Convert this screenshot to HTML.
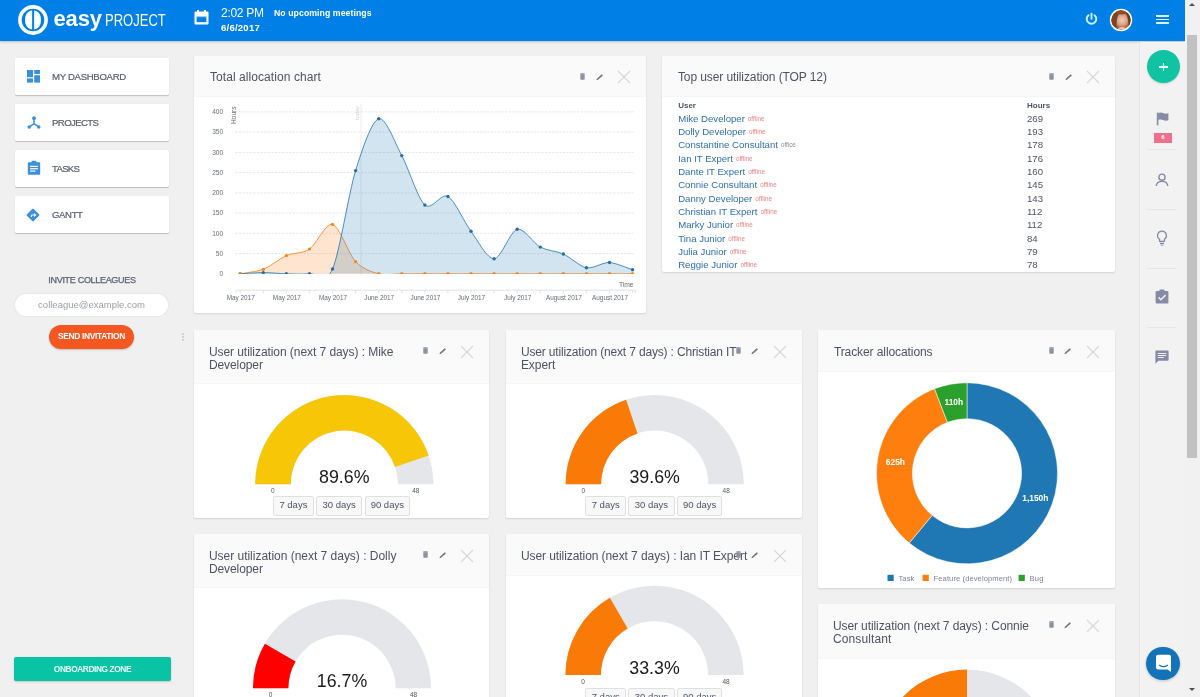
<!DOCTYPE html><html><head><meta charset="utf-8"><title>Easy Project - My dashboard</title><style>
*{box-sizing:border-box;margin:0;padding:0}
html,body{width:1200px;height:697px;overflow:hidden;background:#f0f0f0;font-family:"Liberation Sans",sans-serif;color:#4e5364}
body{position:relative}
#root{position:absolute;left:0;top:0;width:1200px;height:697px;overflow:hidden;will-change:transform}
.abs{position:absolute}
#hdr{position:absolute;left:0;top:0;width:1185px;height:41.4px;background:#0080e6;box-shadow:0 1px 2px rgba(0,0,0,.22)}
.card{position:absolute;background:#fff;border-radius:2px;box-shadow:0 1px 2px rgba(0,0,0,.12),0 0 1px rgba(0,0,0,.06);overflow:hidden}
.card .hd{position:absolute;left:0;top:0;right:0;background:#fafafa;border-bottom:1px solid #f6f6f6}
.card .tt{position:absolute;left:15.9px;top:16.1px;font-size:12px;line-height:13px;color:#4e5364;white-space:nowrap}
.mi{position:absolute;left:14.5px;width:154.5px;height:36.8px;background:#fff;border-radius:1.5px;box-shadow:0 1px 1px rgba(0,0,0,.2),0 0 1px rgba(0,0,0,.1)}
.mi span{position:absolute;left:37.5px;top:12.7px;-webkit-text-stroke:.2px #5b6070;font-size:9.6px;line-height:11px;color:#5b6070;white-space:nowrap}
.mi svg{position:absolute;left:12.2px;top:11.7px}
.btn{position:absolute;top:0;height:20px;border:1px solid #e0e0e0;border-radius:2px;background:#f8f8f8;font-size:9.5px;line-height:16.8px;text-align:center;color:#4e5364}
.row{position:absolute;left:16.2px;font-size:9.6px;line-height:13px;color:#3070b0;white-space:nowrap}
.row i{font-style:normal;font-size:6.3px;color:#ee8385;margin-left:3px;position:relative;top:-1.2px}
.hr{position:absolute;left:365px;font-size:9.6px;line-height:13px;color:#4e5364}
</style></head><body><div id="root">
<header id="hdr">
<svg class="abs" style="left:17px;top:3.8px" width="32" height="32" viewBox="0 0 32 32"><circle cx="16" cy="16" r="13.1" fill="none" stroke="#fff" stroke-width="3.6"/><path d="M15.1 6.6C10.6 7 8 11 8 16s2.6 9 7.1 9.4Z" fill="#fff"/><path d="M17.1 6.6C21.6 7 24 11 24 16s-2.4 9-6.9 9.4Z" fill="#fff"/></svg>
<div class="abs" style="left:53.4px;top:6.3px;font-size:22px;line-height:25px;font-weight:bold;color:#fff;letter-spacing:-0.114px">easy</div>
<div class="abs" style="left:105.3px;top:11.2px;font-size:16.6px;line-height:19px;color:#fff;transform:scaleX(.785);transform-origin:0 0;white-space:nowrap">PROJECT</div>
<svg class="abs" style="left:194px;top:9px" width="15" height="16" viewBox="0 0 15 16"><path d="M1.5 2.5h12a1 1 0 0 1 1 1v11a1 1 0 0 1-1 1h-12a1 1 0 0 1-1-1v-11a1 1 0 0 1 1-1Z" fill="#fff"/><rect x="3" y="1" width="2" height="3" fill="#fff"/><rect x="10" y="1" width="2" height="3" fill="#fff"/><rect x="2.6" y="7" width="9.8" height="6.2" fill="#0080e6"/><rect x="2.6" y="7" width="9.8" height="1.2" fill="#fff" opacity=".6"/></svg>
<div class="abs" style="left:221px;top:6.4px;font-size:12px;line-height:14px;color:#fff;letter-spacing:-0.282px">2:02 PM</div>
<div class="abs" style="left:221px;top:22.4px;font-size:9.5px;line-height:12px;color:#fff;font-weight:bold;letter-spacing:0.246px">6/6/2017</div>
<div class="abs" style="left:274px;top:8px;font-size:8.7px;line-height:11px;color:#fff;font-weight:bold;letter-spacing:0.08px">No upcoming meetings</div>
<svg class="abs" style="left:1085px;top:12px" width="13" height="13" viewBox="0 0 13 13"><path d="M3.500 3.200A4.800 4.800 0 1 0 9.500 3.200" fill="none" stroke="#cdf1ff" stroke-width="1.900" stroke-linecap="round"/><path d="M6.500 1.800v5" stroke="#cdf1ff" stroke-width="1.900" stroke-linecap="round"/></svg>
<svg class="abs" style="left:1109px;top:8px" width="24" height="24" viewBox="0 0 24 24"><defs><clipPath id="av"><circle cx="12" cy="12" r="9.700"/></clipPath><radialGradient id="fg" cx="54%" cy="50%" r="46%"><stop offset="0" stop-color="#f3cdb6"/><stop offset=".45" stop-color="#dca184"/><stop offset=".8" stop-color="#9c5a34"/><stop offset="1" stop-color="#7a4224"/></radialGradient><filter id="bl"><feGaussianBlur stdDeviation=".7"/></filter></defs><circle cx="12" cy="12" r="11.200" fill="#fff"/><g clip-path="url(#av)"><rect width="24" height="24" fill="url(#fg)"/><g filter="url(#bl)"><path d="M1 24C1 10 4 2 13 3C8 6 7 12 8 24Z" fill="#7b4526"/><path d="M23 24c1-12-1-19-8-21c4 4 5 11 4.500 21Z" fill="#6e3a1e"/><ellipse cx="12.500" cy="4" rx="6" ry="2.500" fill="#8a4f2c"/><ellipse cx="13" cy="21.500" rx="4" ry="2.500" fill="#e9c2ac"/></g></g></svg>
<div class="abs" style="left:1156px;top:15.1px;width:13px;height:1.8px;background:#d4f3ff"></div><div class="abs" style="left:1156px;top:18.6px;width:13px;height:1.8px;background:#d4f3ff"></div><div class="abs" style="left:1156px;top:21.9px;width:13px;height:1.8px;background:#d4f3ff"></div>
</header>
<div class="abs" style="left:1185px;top:0;width:15px;height:697px;background:#f1f1f1"></div>
<div class="abs" style="left:1187px;top:35px;width:10.2px;height:422.5px;background:#c1c1c1"></div>
<div class="abs" style="left:1188.5px;top:3px;width:0;height:0;border-left:3.5px solid transparent;border-right:3.5px solid transparent;border-bottom:3.5px solid #505050"></div>
<div class="abs" style="left:1188.5px;top:687.5px;width:0;height:0;border-left:3.5px solid transparent;border-right:3.5px solid transparent;border-top:3.5px solid #505050"></div>
<a class="mi" style="top:58.3px"><svg width="14" height="14" viewBox="0 0 14 14"><rect x="0" y="0" width="6" height="7.2" fill="#3b8fdc"/><rect x="7.2" y="0" width="5.8" height="4" fill="#3b8fdc"/><rect x="0" y="8.4" width="6" height="4.2" fill="#3b8fdc"/><rect x="7.2" y="5.2" width="5.8" height="7.4" fill="#3b8fdc"/></svg><span style="letter-spacing:-0.31px">MY DASHBOARD</span></a>
<a class="mi" style="top:104.3px"><svg width="14" height="14" viewBox="0 0 14 14"><circle cx="7" cy="2.2" r="1.9" fill="#3b8fdc"/><circle cx="2.2" cy="11" r="1.7" fill="#3b8fdc"/><circle cx="11.8" cy="11" r="1.7" fill="#3b8fdc"/><path d="M7 2.5v5.2M7 7.7L2.4 10.8M7 7.7l4.6 3.1" stroke="#3b8fdc" stroke-width="1.5" fill="none"/></svg><span style="letter-spacing:-0.601px">PROJECTS</span></a>
<a class="mi" style="top:150.3px"><svg style="top:9.7px" width="14" height="15" viewBox="0 0 14 14" preserveAspectRatio="none"><path d="M1.8 2h10.4a1 1 0 0 1 1 1v9.8a1 1 0 0 1-1 1H1.8a1 1 0 0 1-1-1V3a1 1 0 0 1 1-1Z" fill="#3b8fdc"/><rect x="4.6" y="0.6" width="4.8" height="2.6" rx=".8" fill="#3b8fdc"/><rect x="3" y="5.4" width="8" height="1.1" fill="#fff"/><rect x="3" y="7.6" width="8" height="1.1" fill="#fff"/><rect x="3" y="9.8" width="5.4" height="1.1" fill="#fff"/></svg><span style="letter-spacing:-0.691px">TASKS</span></a>
<a class="mi" style="top:196.3px"><svg style="left:11.4px" width="14" height="14" viewBox="0 0 14 14"><rect x="2.2" y="2.2" width="9.6" height="9.6" rx="1" transform="rotate(45 7 7)" fill="#3b8fdc"/><path d="M4.8 9V7.2a.8.8 0 0 1 .8-.8h2.6V4.9L10.4 7 8.2 9V7.6H6V9Z" fill="#fff"/></svg><span style="letter-spacing:-0.383px">GANTT</span></a>
<div class="abs" style="left:15px;top:274.4px;width:154px;text-align:center;font-size:9px;line-height:12px;color:#5b6070;-webkit-text-stroke:.25px #5b6070;letter-spacing:-0.308px;white-space:nowrap">INVITE COLLEAGUES</div>
<div class="abs" style="left:15px;top:294px;width:153px;height:22px;border-radius:11px;background:#fff;box-shadow:0 0 2px rgba(0,0,0,.12);text-align:center;font-size:9.5px;line-height:22px;color:#9b9ea8">colleague@example.com</div>
<div class="abs" style="left:49px;top:325.4px;width:85px;height:23.6px;border-radius:12px;background:#f4571f;box-shadow:0 1px 2px rgba(0,0,0,.2);text-align:center;font-size:8.4px;font-weight:bold;line-height:23.6px;color:#fff;letter-spacing:-0.323px;white-space:nowrap">SEND INVITATION</div>
<div class="abs" style="left:14px;top:656.8px;width:157px;height:24px;border-radius:2px;background:#08c4a5;box-shadow:0 1px 2px rgba(0,0,0,.18);text-align:center;font-size:8.4px;font-weight:bold;line-height:25.4px;color:#e8fffb;letter-spacing:-0.429px;white-space:nowrap">ONBOARDING ZONE</div>
<div class="abs" style="left:182px;top:333px;width:2px;height:2px;border-radius:1px;background:#c9c9c9"></div>
<div class="abs" style="left:182px;top:336px;width:2px;height:2px;border-radius:1px;background:#c9c9c9"></div>
<div class="abs" style="left:182px;top:339px;width:2px;height:2px;border-radius:1px;background:#c9c9c9"></div>
<div class="abs" style="left:1140px;top:42px;width:45px;height:655px;background:#f2f2f2"></div>
<div class="abs" style="left:1139.3px;top:43px;width:1px;height:654px;background:#e6e6e6"></div>
<div class="abs" style="left:1146.8px;top:49.9px;width:33.2px;height:33.2px;border-radius:50%;background:#10c3a3;box-shadow:0 1px 2px rgba(0,0,0,.15)"></div>
<div class="abs" style="left:1159.3px;top:66.3px;width:8.4px;height:1.5px;background:#e4fffa"></div><div class="abs" style="left:1162.75px;top:62.85px;width:1.5px;height:8.4px;background:#e4fffa"></div>
<svg class="abs" style="left:1156px;top:112px" width="13" height="14" viewBox="0 0 13 14"><path d="M.8 0.6h1.6V13.4H.8Z" fill="#858ba4"/><path d="M2.2 1c2-.9 3.4-.6 5 .1s3.200 .8 5.200.1v7c-2 .7-3.600.6-5.200-.1s-3-.9-5-.1Z" fill="#858ba4"/></svg>
<div class="abs" style="left:1154px;top:133.4px;width:18px;height:9.2px;background:#ef6f8c;color:#fff;font-size:6px;font-weight:bold;line-height:9.2px;text-align:center">6</div>
<svg class="abs" style="left:1155px;top:173px" width="14" height="14" viewBox="0 0 14 14"><circle cx="7" cy="4.2" r="3.1" fill="none" stroke="#858ba4" stroke-width="1.4"/><path d="M1.2 13c.4-3 2.6-4.6 5.800-4.600s5.400 1.600 5.800 4.600" fill="none" stroke="#858ba4" stroke-width="1.4"/></svg>
<svg class="abs" style="left:1155px;top:230px" width="14" height="16" viewBox="0 0 14 16"><path d="M7 1.200a4.400 4.400 0 0 0-2.400 8.100v2h4.800v-2A4.400 4.400 0 0 0 7 1.200Z" fill="none" stroke="#858ba4" stroke-width="1.3"/><path d="M5 13.400h4M5.600 15h2.800" stroke="#858ba4" stroke-width="1.2"/></svg>
<svg class="abs" style="left:1155px;top:289px" width="14" height="15" viewBox="0 0 14 15"><path d="M1.600 2h10.800a1 1 0 0 1 1 1v10.600a1 1 0 0 1-1 1H1.600a1 1 0 0 1-1-1V3a1 1 0 0 1 1-1Z" fill="#858ba4"/><rect x="4.400" y=".6" width="5.200" height="2.600" rx=".8" fill="#858ba4"/><path d="M3.600 8.400l2.300 2.300 4.600-4.600" fill="none" stroke="#f0f0f0" stroke-width="1.500"/></svg>
<svg class="abs" style="left:1155px;top:350px" width="14" height="14" viewBox="0 0 14 14"><path d="M1.400 0.400h11.200a1 1 0 0 1 1 1v8.400a1 1 0 0 1-1 1H3.400L.4 13.800V1.400a1 1 0 0 1 1-1Z" fill="#858ba4"/><rect x="2.800" y="3" width="8.400" height="1" fill="#f0f0f0"/><rect x="2.800" y="5" width="8.400" height="1" fill="#f0f0f0"/><rect x="2.800" y="7" width="6" height="1" fill="#f0f0f0"/></svg>
<div class="abs" style="left:1147px;top:148.6px;width:29px;height:1px;background:#e6e6e6"></div>
<div class="abs" style="left:1147px;top:208.8px;width:29px;height:1px;background:#e6e6e6"></div>
<div class="abs" style="left:1147px;top:268px;width:29px;height:1px;background:#e6e6e6"></div>
<div class="abs" style="left:1147px;top:327.3px;width:29px;height:1px;background:#e6e6e6"></div>
<div class="abs" style="left:1146.4px;top:646.9px;width:33.2px;height:33.2px;border-radius:50%;background:#1273b9;box-shadow:0 1px 3px rgba(0,0,0,.2)"></div>
<svg class="abs" style="left:1154.6px;top:654.2px" width="17" height="19" viewBox="0 0 17 19"><path d="M3 0.800h11a2 2 0 0 1 2 2v15.200l-3.400-2.600H3a2 2 0 0 1-2-2V2.800a2 2 0 0 1 2-2Z" fill="#fff"/><path d="M4.400 11.200c2.400 1.700 5.800 1.700 8.200 0" fill="none" stroke="#1273b9" stroke-width="1.100" stroke-linecap="round"/></svg>
<div class="card" style="left:194px;top:55.5px;width:452px;height:257.5px">
<div class="hd" style="height:41.6px"></div>
<div class="tt" style="top:15.5px;left:15.9px"><span style="letter-spacing:0.076px">Total allocation chart</span></div>
<svg class="abs" style="left:386.4px;top:17.4px" width="5" height="7" viewBox="0 0 5 7"><rect x=".3" y="1.2" width="4.400" height="5.600" rx=".8" fill="#8c91a4"/><rect x="0" y=".5" width="5" height=".9" fill="#8c91a4"/><rect x="1.500" y="0" width="2" height=".8" fill="#8c91a4"/></svg>
<svg class="abs" style="left:401.6px;top:17.4px" width="8" height="8" viewBox="0 0 8 8"><path d="M.5 7.200l.4-1.500L5.700 1.200l1.200 1.200-4.900 4.400Z" fill="#6f7487"/></svg>
<svg class="abs" style="left:423px;top:14.6px" width="14" height="14" viewBox="0 0 14 14"><path d="M1 1l12 12M13 1L1 13" stroke="#d8d8d8" stroke-width="1.2" fill="none"/></svg>
<svg class="abs" style="left:0;top:0" width="452" height="258" viewBox="0 0 452 258">
<defs><clipPath id="cp"><rect x="40.19999999999999" y="45.900000000000006" width="404.40000000000003" height="172.20"/></clipPath></defs>
<text x="29.2" y="220.0" text-anchor="end" font-family='"Liberation Sans", sans-serif' font-size="6.6" fill="#6c707c">0</text>
<line x1="41.2" x2="439.6" y1="197.6" y2="197.6" stroke="#e6e6e6" stroke-width="1" stroke-dasharray="2.2 1.4"/>
<text x="29.2" y="199.8" text-anchor="end" font-family='"Liberation Sans", sans-serif' font-size="6.6" fill="#6c707c">50</text>
<line x1="41.2" x2="439.6" y1="177.3" y2="177.3" stroke="#e6e6e6" stroke-width="1" stroke-dasharray="2.2 1.4"/>
<text x="29.2" y="179.5" text-anchor="end" font-family='"Liberation Sans", sans-serif' font-size="6.6" fill="#6c707c">100</text>
<line x1="41.2" x2="439.6" y1="157.1" y2="157.1" stroke="#e6e6e6" stroke-width="1" stroke-dasharray="2.2 1.4"/>
<text x="29.2" y="159.3" text-anchor="end" font-family='"Liberation Sans", sans-serif' font-size="6.6" fill="#6c707c">150</text>
<line x1="41.2" x2="439.6" y1="136.9" y2="136.9" stroke="#e6e6e6" stroke-width="1" stroke-dasharray="2.2 1.4"/>
<text x="29.2" y="139.1" text-anchor="end" font-family='"Liberation Sans", sans-serif' font-size="6.6" fill="#6c707c">200</text>
<line x1="41.2" x2="439.6" y1="116.6" y2="116.6" stroke="#e6e6e6" stroke-width="1" stroke-dasharray="2.2 1.4"/>
<text x="29.2" y="118.8" text-anchor="end" font-family='"Liberation Sans", sans-serif' font-size="6.6" fill="#6c707c">250</text>
<line x1="41.2" x2="439.6" y1="96.4" y2="96.4" stroke="#e6e6e6" stroke-width="1" stroke-dasharray="2.2 1.4"/>
<text x="29.2" y="98.6" text-anchor="end" font-family='"Liberation Sans", sans-serif' font-size="6.6" fill="#6c707c">300</text>
<line x1="41.2" x2="439.6" y1="76.1" y2="76.1" stroke="#e6e6e6" stroke-width="1" stroke-dasharray="2.2 1.4"/>
<text x="29.2" y="78.3" text-anchor="end" font-family='"Liberation Sans", sans-serif' font-size="6.6" fill="#6c707c">350</text>
<line x1="41.2" x2="439.6" y1="55.9" y2="55.9" stroke="#e6e6e6" stroke-width="1" stroke-dasharray="2.2 1.4"/>
<text x="29.2" y="58.1" text-anchor="end" font-family='"Liberation Sans", sans-serif' font-size="6.6" fill="#6c707c">400</text>
<line x1="167" x2="167" y1="47.9" y2="217.8" stroke="#ececec" stroke-width="1"/>
<text transform="translate(164.5,63.9) rotate(-90)" font-family='"Liberation Sans", sans-serif' font-size="5.6" fill="#d2d2d2">today</text>
<text transform="translate(41.9,67.9) rotate(-90)" font-family='"Liberation Sans", sans-serif' font-size="6.5" fill="#6a6e7a">Hours</text>
<text x="439.6" y="231.1" text-anchor="end" font-family='"Liberation Sans", sans-serif' font-size="6.7" fill="#666b78">Time</text>
<path d="M42.2,237.2V234.2H441.6V237.2" fill="none" stroke="#e2e2e2" stroke-width="1"/>
<line x1="46.2" x2="46.2" y1="234.2" y2="237.2" stroke="#e2e2e2" stroke-width="1"/>
<line x1="69.3" x2="69.3" y1="234.2" y2="237.2" stroke="#e2e2e2" stroke-width="1"/>
<line x1="92.4" x2="92.4" y1="234.2" y2="237.2" stroke="#e2e2e2" stroke-width="1"/>
<line x1="115.4" x2="115.4" y1="234.2" y2="237.2" stroke="#e2e2e2" stroke-width="1"/>
<line x1="138.5" x2="138.5" y1="234.2" y2="237.2" stroke="#e2e2e2" stroke-width="1"/>
<line x1="161.6" x2="161.6" y1="234.2" y2="237.2" stroke="#e2e2e2" stroke-width="1"/>
<line x1="184.7" x2="184.7" y1="234.2" y2="237.2" stroke="#e2e2e2" stroke-width="1"/>
<line x1="207.8" x2="207.8" y1="234.2" y2="237.2" stroke="#e2e2e2" stroke-width="1"/>
<line x1="230.9" x2="230.9" y1="234.2" y2="237.2" stroke="#e2e2e2" stroke-width="1"/>
<line x1="253.9" x2="253.9" y1="234.2" y2="237.2" stroke="#e2e2e2" stroke-width="1"/>
<line x1="277.0" x2="277.0" y1="234.2" y2="237.2" stroke="#e2e2e2" stroke-width="1"/>
<line x1="300.1" x2="300.1" y1="234.2" y2="237.2" stroke="#e2e2e2" stroke-width="1"/>
<line x1="323.2" x2="323.2" y1="234.2" y2="237.2" stroke="#e2e2e2" stroke-width="1"/>
<line x1="346.3" x2="346.3" y1="234.2" y2="237.2" stroke="#e2e2e2" stroke-width="1"/>
<line x1="369.4" x2="369.4" y1="234.2" y2="237.2" stroke="#e2e2e2" stroke-width="1"/>
<line x1="392.4" x2="392.4" y1="234.2" y2="237.2" stroke="#e2e2e2" stroke-width="1"/>
<line x1="415.5" x2="415.5" y1="234.2" y2="237.2" stroke="#e2e2e2" stroke-width="1"/>
<line x1="438.6" x2="438.6" y1="234.2" y2="237.2" stroke="#e2e2e2" stroke-width="1"/>
<text x="46.7" y="244.4" text-anchor="middle" font-family='"Liberation Sans", sans-serif' font-size="6.4" fill="#666b78">May 2017</text>
<text x="92.9" y="244.4" text-anchor="middle" font-family='"Liberation Sans", sans-serif' font-size="6.4" fill="#666b78">May 2017</text>
<text x="139.0" y="244.4" text-anchor="middle" font-family='"Liberation Sans", sans-serif' font-size="6.4" fill="#666b78">May 2017</text>
<text x="185.2" y="244.4" text-anchor="middle" font-family='"Liberation Sans", sans-serif' font-size="6.4" fill="#666b78">June 2017</text>
<text x="231.4" y="244.4" text-anchor="middle" font-family='"Liberation Sans", sans-serif' font-size="6.4" fill="#666b78">June 2017</text>
<text x="277.5" y="244.4" text-anchor="middle" font-family='"Liberation Sans", sans-serif' font-size="6.4" fill="#666b78">July 2017</text>
<text x="323.7" y="244.4" text-anchor="middle" font-family='"Liberation Sans", sans-serif' font-size="6.4" fill="#666b78">July 2017</text>
<text x="369.9" y="244.4" text-anchor="middle" font-family='"Liberation Sans", sans-serif' font-size="6.4" fill="#666b78">August 2017</text>
<text x="416.0" y="244.4" text-anchor="middle" font-family='"Liberation Sans", sans-serif' font-size="6.4" fill="#666b78">August 2017</text>
<g clip-path="url(#cp)">
<path d="M46.20,217.80Q64.67,215.17,69.28,213.35C76.21,210.62,85.44,202.62,92.36,199.59S108.52,197.79,115.45,193.11S131.60,166.54,138.53,168.42S154.69,198.25,161.61,205.66S177.77,215.98,184.69,217.80S200.85,217.80,207.78,217.80S223.93,217.80,230.86,217.80S247.02,217.80,253.94,217.80S270.10,217.80,277.02,217.80S293.18,217.80,300.11,217.80S316.26,217.80,323.19,217.80S339.35,217.80,346.27,217.80S362.43,217.80,369.35,217.80S385.51,217.80,392.44,217.80S408.59,217.80,415.52,217.80Q420.13,217.80,438.60,217.80L438.60,217.80L46.20,217.80Z" fill="#ff7f0e" fill-opacity=".2"/>
<path d="M46.20,217.80Q64.67,215.17,69.28,213.35C76.21,210.62,85.44,202.62,92.36,199.59S108.52,197.79,115.45,193.11S131.60,166.54,138.53,168.42S154.69,198.25,161.61,205.66S177.77,215.98,184.69,217.80S200.85,217.80,207.78,217.80S223.93,217.80,230.86,217.80S247.02,217.80,253.94,217.80S270.10,217.80,277.02,217.80S293.18,217.80,300.11,217.80S316.26,217.80,323.19,217.80S339.35,217.80,346.27,217.80S362.43,217.80,369.35,217.80S385.51,217.80,392.44,217.80S408.59,217.80,415.52,217.80Q420.13,217.80,438.60,217.80" fill="none" stroke="#ff7f0e" stroke-width=".8"/>
<path d="M46.20,217.80Q64.67,216.59,69.28,216.59C76.21,216.59,85.44,217.62,92.36,217.80S108.52,218.53,115.45,217.80S131.60,228.42,138.53,212.94S154.69,137.11,161.61,114.59S177.77,65.03,184.69,62.78S200.85,86.68,207.78,99.61S223.93,142.86,230.86,148.99S247.02,136.55,253.94,140.49S270.10,165.95,277.02,175.30S293.18,203.13,300.11,202.82S316.26,175.04,323.19,173.28S339.35,187.38,346.27,191.09S362.43,194.87,369.35,197.97S385.51,210.45,392.44,211.73S408.59,206.16,415.52,206.47Q420.13,206.67,438.60,213.75L438.60,217.80L46.20,217.80Z" fill="#1f77b4" fill-opacity=".2"/>
<path d="M46.20,217.80Q64.67,216.59,69.28,216.59C76.21,216.59,85.44,217.62,92.36,217.80S108.52,218.53,115.45,217.80S131.60,228.42,138.53,212.94S154.69,137.11,161.61,114.59S177.77,65.03,184.69,62.78S200.85,86.68,207.78,99.61S223.93,142.86,230.86,148.99S247.02,136.55,253.94,140.49S270.10,165.95,277.02,175.30S293.18,203.13,300.11,202.82S316.26,175.04,323.19,173.28S339.35,187.38,346.27,191.09S362.43,194.87,369.35,197.97S385.51,210.45,392.44,211.73S408.59,206.16,415.52,206.47Q420.13,206.67,438.60,213.75" fill="none" stroke="#1f77b4" stroke-width=".8"/>
<circle cx="46.20" cy="217.80" r="1.7" fill="#2b6c9c"/>
<circle cx="69.28" cy="216.59" r="1.7" fill="#2b6c9c"/>
<circle cx="92.36" cy="217.80" r="1.7" fill="#2b6c9c"/>
<circle cx="115.45" cy="217.80" r="1.7" fill="#2b6c9c"/>
<circle cx="138.53" cy="212.94" r="1.7" fill="#2b6c9c"/>
<circle cx="161.61" cy="114.59" r="1.7" fill="#2b6c9c"/>
<circle cx="184.69" cy="62.78" r="1.7" fill="#2b6c9c"/>
<circle cx="207.78" cy="99.61" r="1.7" fill="#2b6c9c"/>
<circle cx="230.86" cy="148.99" r="1.7" fill="#2b6c9c"/>
<circle cx="253.94" cy="140.49" r="1.7" fill="#2b6c9c"/>
<circle cx="277.02" cy="175.30" r="1.7" fill="#2b6c9c"/>
<circle cx="300.11" cy="202.82" r="1.7" fill="#2b6c9c"/>
<circle cx="323.19" cy="173.28" r="1.7" fill="#2b6c9c"/>
<circle cx="346.27" cy="191.09" r="1.7" fill="#2b6c9c"/>
<circle cx="369.35" cy="197.97" r="1.7" fill="#2b6c9c"/>
<circle cx="392.44" cy="211.73" r="1.7" fill="#2b6c9c"/>
<circle cx="415.52" cy="206.47" r="1.7" fill="#2b6c9c"/>
<circle cx="438.60" cy="213.75" r="1.7" fill="#2b6c9c"/>
<circle cx="46.20" cy="217.80" r="1.7" fill="#f08a2a"/>
<circle cx="69.28" cy="213.35" r="1.7" fill="#f08a2a"/>
<circle cx="92.36" cy="199.59" r="1.7" fill="#f08a2a"/>
<circle cx="115.45" cy="193.11" r="1.7" fill="#f08a2a"/>
<circle cx="138.53" cy="168.42" r="1.7" fill="#f08a2a"/>
<circle cx="161.61" cy="205.66" r="1.7" fill="#f08a2a"/>
<circle cx="184.69" cy="217.80" r="1.7" fill="#f08a2a"/>
<circle cx="207.78" cy="217.80" r="1.7" fill="#f08a2a"/>
<circle cx="230.86" cy="217.80" r="1.7" fill="#f08a2a"/>
<circle cx="253.94" cy="217.80" r="1.7" fill="#f08a2a"/>
<circle cx="277.02" cy="217.80" r="1.7" fill="#f08a2a"/>
<circle cx="300.11" cy="217.80" r="1.7" fill="#f08a2a"/>
<circle cx="323.19" cy="217.80" r="1.7" fill="#f08a2a"/>
<circle cx="346.27" cy="217.80" r="1.7" fill="#f08a2a"/>
<circle cx="369.35" cy="217.80" r="1.7" fill="#f08a2a"/>
<circle cx="392.44" cy="217.80" r="1.7" fill="#f08a2a"/>
<circle cx="415.52" cy="217.80" r="1.7" fill="#f08a2a"/>
<circle cx="438.60" cy="217.80" r="1.7" fill="#f08a2a"/>
</g></svg>
</div>
<div class="card" style="left:662px;top:55.5px;width:453px;height:216.6px">
<div class="hd" style="height:41.6px"></div>
<div class="tt" style="top:15.5px;left:15.9px"><span style="letter-spacing:-0.094px">Top user utilization (TOP 12)</span></div>
<svg class="abs" style="left:387.4px;top:17.4px" width="5" height="7" viewBox="0 0 5 7"><rect x=".3" y="1.2" width="4.400" height="5.600" rx=".8" fill="#8c91a4"/><rect x="0" y=".5" width="5" height=".9" fill="#8c91a4"/><rect x="1.500" y="0" width="2" height=".8" fill="#8c91a4"/></svg>
<svg class="abs" style="left:402.6px;top:17.4px" width="8" height="8" viewBox="0 0 8 8"><path d="M.5 7.200l.4-1.500L5.700 1.200l1.200 1.200-4.900 4.400Z" fill="#6f7487"/></svg>
<svg class="abs" style="left:424px;top:14.6px" width="14" height="14" viewBox="0 0 14 14"><path d="M1 1l12 12M13 1L1 13" stroke="#d8d8d8" stroke-width="1.2" fill="none"/></svg>
<div class="row" style="top:43px;color:#4e5364;font-weight:bold;font-size:8px">User</div><div class="hr" style="top:43px;font-weight:bold;font-size:8px">Hours</div>
<div class="row" style="top:56.30px">Mike Developer<i>offline</i></div><div class="hr" style="top:56.30px">269</div>
<div class="row" style="top:69.63px">Dolly Developer<i>offline</i></div><div class="hr" style="top:69.63px">193</div>
<div class="row" style="top:82.96px">Constantine Consultant<i style="color:#8a8d96">office</i></div><div class="hr" style="top:82.96px">178</div>
<div class="row" style="top:96.29px">Ian IT Expert<i>offline</i></div><div class="hr" style="top:96.29px">176</div>
<div class="row" style="top:109.62px">Dante IT Expert<i>offline</i></div><div class="hr" style="top:109.62px">160</div>
<div class="row" style="top:122.95px">Connie Consultant<i>offline</i></div><div class="hr" style="top:122.95px">145</div>
<div class="row" style="top:136.28px">Danny Developer<i>offline</i></div><div class="hr" style="top:136.28px">143</div>
<div class="row" style="top:149.61px">Christian IT Expert<i>offline</i></div><div class="hr" style="top:149.61px">112</div>
<div class="row" style="top:162.94px">Marky Junior<i>offline</i></div><div class="hr" style="top:162.94px">112</div>
<div class="row" style="top:176.27px">Tina Junior<i>offline</i></div><div class="hr" style="top:176.27px">84</div>
<div class="row" style="top:189.60px">Julia Junior<i>offline</i></div><div class="hr" style="top:189.60px">79</div>
<div class="row" style="top:202.93px">Reggie Junior<i>offline</i></div><div class="hr" style="top:202.93px">78</div>
</div>
<div class="card" style="left:194px;top:330px;width:295px;height:187.5px">
<div class="hd" style="height:54.2px"></div>
<div class="tt" style="top:16.0px;left:14.9px"><span style="letter-spacing:-0.062px">User utilization (next 7 days) : Mike</span><br><span style="letter-spacing:-0.087px">Developer</span></div>
<svg class="abs" style="left:229.4px;top:17.4px" width="5" height="7" viewBox="0 0 5 7"><rect x=".3" y="1.2" width="4.400" height="5.600" rx=".8" fill="#8c91a4"/><rect x="0" y=".5" width="5" height=".9" fill="#8c91a4"/><rect x="1.500" y="0" width="2" height=".8" fill="#8c91a4"/></svg>
<svg class="abs" style="left:244.6px;top:17.4px" width="8" height="8" viewBox="0 0 8 8"><path d="M.5 7.200l.4-1.500L5.700 1.200l1.200 1.200-4.900 4.400Z" fill="#6f7487"/></svg>
<svg class="abs" style="left:266px;top:14.6px" width="14" height="14" viewBox="0 0 14 14"><path d="M1 1l12 12M13 1L1 13" stroke="#d8d8d8" stroke-width="1.2" fill="none"/></svg>
<svg class="abs" style="left:0;top:0" width="295" height="260" viewBox="0 0 295 260">
<path d="M61.20,154.20A89.1,89.1 0 0 1 239.40,154.20L203.90,154.20A53.6,53.6 0 0 0 96.70,154.20Z" fill="#e4e6ea"/>
<path d="M61.20,154.20A89.1,89.1 0 0 1 234.69,125.60L201.06,137.00A53.6,53.6 0 0 0 96.70,154.20Z" fill="#f6c607"/>
<text x="150.3" y="153.0" text-anchor="middle" font-family='"Liberation Sans", sans-serif' font-size="17.8" fill="#1a1a1a">89.6%</text>
<text x="78.8" y="163.0" text-anchor="middle" font-family='"Liberation Sans", sans-serif' font-size="6.5" fill="#555">0</text>
<text x="221.8" y="163.0" text-anchor="middle" font-family='"Liberation Sans", sans-serif' font-size="6.5" fill="#555">48</text>
</svg>
<div class="abs" style="left:0;top:165.5px;width:100%;height:20px">
<div class="btn" style="left:78.9px;width:41px">7 days</div><div class="btn" style="left:121.9px;width:46.4px">30 days</div><div class="btn" style="left:170.5px;width:45.6px">90 days</div>
</div>
</div>
<div class="card" style="left:506px;top:330px;width:295.5px;height:187.5px">
<div class="hd" style="height:54.2px"></div>
<div class="tt" style="top:16.0px;left:14.9px"><span style="letter-spacing:-0.162px">User utilization (next 7 days) : Christian IT</span><br><span style="letter-spacing:-0.036px">Expert</span></div>
<svg class="abs" style="left:229.9px;top:17.4px" width="5" height="7" viewBox="0 0 5 7"><rect x=".3" y="1.2" width="4.400" height="5.600" rx=".8" fill="#8c91a4"/><rect x="0" y=".5" width="5" height=".9" fill="#8c91a4"/><rect x="1.500" y="0" width="2" height=".8" fill="#8c91a4"/></svg>
<svg class="abs" style="left:245.1px;top:17.4px" width="8" height="8" viewBox="0 0 8 8"><path d="M.5 7.200l.4-1.500L5.700 1.200l1.200 1.200-4.900 4.400Z" fill="#6f7487"/></svg>
<svg class="abs" style="left:266.5px;top:14.6px" width="14" height="14" viewBox="0 0 14 14"><path d="M1 1l12 12M13 1L1 13" stroke="#d8d8d8" stroke-width="1.2" fill="none"/></svg>
<svg class="abs" style="left:0;top:0" width="295.5" height="260" viewBox="0 0 295.5 260">
<path d="M59.60,154.20A89.1,89.1 0 0 1 237.80,154.20L202.30,154.20A53.6,53.6 0 0 0 95.10,154.20Z" fill="#e4e6ea"/>
<path d="M59.60,154.20A89.1,89.1 0 0 1 120.10,69.81L131.50,103.44A53.6,53.6 0 0 0 95.10,154.20Z" fill="#f97a07"/>
<text x="148.7" y="153.0" text-anchor="middle" font-family='"Liberation Sans", sans-serif' font-size="17.8" fill="#1a1a1a">39.6%</text>
<text x="77.2" y="163.0" text-anchor="middle" font-family='"Liberation Sans", sans-serif' font-size="6.5" fill="#555">0</text>
<text x="220.2" y="163.0" text-anchor="middle" font-family='"Liberation Sans", sans-serif' font-size="6.5" fill="#555">48</text>
</svg>
<div class="abs" style="left:0;top:165.5px;width:100%;height:20px">
<div class="btn" style="left:79.2px;width:41px">7 days</div><div class="btn" style="left:122.2px;width:46.4px">30 days</div><div class="btn" style="left:170.8px;width:45.6px">90 days</div>
</div>
</div>
<div class="card" style="left:194px;top:534px;width:295px;height:188px">
<div class="hd" style="height:54.2px"></div>
<div class="tt" style="top:16.0px;left:14.9px"><span style="letter-spacing:-0.015px">User utilization (next 7 days) : Dolly</span><br><span style="letter-spacing:-0.087px">Developer</span></div>
<svg class="abs" style="left:229.4px;top:17.4px" width="5" height="7" viewBox="0 0 5 7"><rect x=".3" y="1.2" width="4.400" height="5.600" rx=".8" fill="#8c91a4"/><rect x="0" y=".5" width="5" height=".9" fill="#8c91a4"/><rect x="1.500" y="0" width="2" height=".8" fill="#8c91a4"/></svg>
<svg class="abs" style="left:244.6px;top:17.4px" width="8" height="8" viewBox="0 0 8 8"><path d="M.5 7.200l.4-1.500L5.700 1.200l1.200 1.200-4.900 4.400Z" fill="#6f7487"/></svg>
<svg class="abs" style="left:266px;top:14.6px" width="14" height="14" viewBox="0 0 14 14"><path d="M1 1l12 12M13 1L1 13" stroke="#d8d8d8" stroke-width="1.2" fill="none"/></svg>
<svg class="abs" style="left:0;top:0" width="295" height="260" viewBox="0 0 295 260">
<path d="M58.90,154.30A89.1,89.1 0 0 1 237.10,154.30L201.60,154.30A53.6,53.6 0 0 0 94.40,154.30Z" fill="#e4e6ea"/>
<path d="M58.90,154.30A89.1,89.1 0 0 1 70.88,109.67L101.61,127.45A53.6,53.6 0 0 0 94.40,154.30Z" fill="#ff0000"/>
<text x="148.0" y="153.1" text-anchor="middle" font-family='"Liberation Sans", sans-serif' font-size="17.8" fill="#1a1a1a">16.7%</text>
<text x="76.5" y="163.1" text-anchor="middle" font-family='"Liberation Sans", sans-serif' font-size="6.5" fill="#555">0</text>
<text x="219.5" y="163.1" text-anchor="middle" font-family='"Liberation Sans", sans-serif' font-size="6.5" fill="#555">48</text>
</svg>
<div class="abs" style="left:0;top:165.6px;width:100%;height:20px">
<div class="btn" style="left:78.9px;width:41px">7 days</div><div class="btn" style="left:121.9px;width:46.4px">30 days</div><div class="btn" style="left:170.5px;width:45.6px">90 days</div>
</div>
</div>
<div class="card" style="left:506px;top:534px;width:295.5px;height:170px">
<div class="hd" style="height:42px"></div>
<div class="tt" style="top:16.0px;left:14.9px"><span style="letter-spacing:-0.079px">User utilization (next 7 days) : Ian IT Expert</span></div>
<svg class="abs" style="left:229.9px;top:17.4px" width="5" height="7" viewBox="0 0 5 7"><rect x=".3" y="1.2" width="4.400" height="5.600" rx=".8" fill="#8c91a4"/><rect x="0" y=".5" width="5" height=".9" fill="#8c91a4"/><rect x="1.500" y="0" width="2" height=".8" fill="#8c91a4"/></svg>
<svg class="abs" style="left:245.1px;top:17.4px" width="8" height="8" viewBox="0 0 8 8"><path d="M.5 7.200l.4-1.500L5.700 1.200l1.200 1.200-4.900 4.400Z" fill="#6f7487"/></svg>
<svg class="abs" style="left:266.5px;top:14.6px" width="14" height="14" viewBox="0 0 14 14"><path d="M1 1l12 12M13 1L1 13" stroke="#d8d8d8" stroke-width="1.2" fill="none"/></svg>
<svg class="abs" style="left:0;top:0" width="295.5" height="260" viewBox="0 0 295.5 260">
<path d="M59.40,140.90A89.1,89.1 0 0 1 237.60,140.90L202.10,140.90A53.6,53.6 0 0 0 94.90,140.90Z" fill="#e4e6ea"/>
<path d="M59.40,140.90A89.1,89.1 0 0 1 103.87,63.78L121.65,94.51A53.6,53.6 0 0 0 94.90,140.90Z" fill="#f97a07"/>
<text x="148.5" y="139.7" text-anchor="middle" font-family='"Liberation Sans", sans-serif' font-size="17.8" fill="#1a1a1a">33.3%</text>
<text x="77.0" y="149.7" text-anchor="middle" font-family='"Liberation Sans", sans-serif' font-size="6.5" fill="#555">0</text>
<text x="220.0" y="149.7" text-anchor="middle" font-family='"Liberation Sans", sans-serif' font-size="6.5" fill="#555">48</text>
</svg>
<div class="abs" style="left:0;top:153.9px;width:100%;height:20px">
<div class="btn" style="left:79.2px;width:41px">7 days</div><div class="btn" style="left:122.2px;width:46.4px">30 days</div><div class="btn" style="left:170.8px;width:45.6px">90 days</div>
</div>
</div>
<div class="card" style="left:818px;top:330px;width:296.5px;height:258px">
<div class="hd" style="height:41.6px"></div>
<div class="tt" style="top:16.0px;left:15.9px"><span style="letter-spacing:-0.087px">Tracker allocations</span></div>
<svg class="abs" style="left:230.9px;top:17.4px" width="5" height="7" viewBox="0 0 5 7"><rect x=".3" y="1.2" width="4.400" height="5.600" rx=".8" fill="#8c91a4"/><rect x="0" y=".5" width="5" height=".9" fill="#8c91a4"/><rect x="1.500" y="0" width="2" height=".8" fill="#8c91a4"/></svg>
<svg class="abs" style="left:246.1px;top:17.4px" width="8" height="8" viewBox="0 0 8 8"><path d="M.5 7.200l.4-1.500L5.700 1.200l1.200 1.200-4.900 4.400Z" fill="#6f7487"/></svg>
<svg class="abs" style="left:267.5px;top:14.6px" width="14" height="14" viewBox="0 0 14 14"><path d="M1 1l12 12M13 1L1 13" stroke="#d8d8d8" stroke-width="1.2" fill="none"/></svg>
<svg class="abs" style="left:0;top:0" width="297" height="258" viewBox="0 0 297 258">
<path d="M149.00,52.80A90.5,90.5 0 1 1 91.28,213.00L114.18,185.35A54.6,54.6 0 1 0 149.00,88.70Z" fill="#1f77b4" stroke="#fff" stroke-width=".5"/>
<path d="M91.28,213.00A90.5,90.5 0 0 1 116.56,58.82L129.43,92.33A54.6,54.6 0 0 0 114.18,185.35Z" fill="#ff7f0e" stroke="#fff" stroke-width=".5"/>
<path d="M116.56,58.82A90.5,90.5 0 0 1 149.00,52.80L149.00,88.70A54.6,54.6 0 0 0 129.43,92.33Z" fill="#2ca02c" stroke="#fff" stroke-width=".5"/>
<text x="217.3" y="170.8" text-anchor="middle" font-family='"Liberation Sans", sans-serif' font-size="8.4" font-weight="bold" fill="#fff">1,150h</text>
<text x="77.4" y="134.5" text-anchor="middle" font-family='"Liberation Sans", sans-serif' font-size="8.4" font-weight="bold" fill="#fff">625h</text>
<text x="135.8" y="74.9" text-anchor="middle" font-family='"Liberation Sans", sans-serif' font-size="8.4" font-weight="bold" fill="#fff">110h</text>
<rect x="69.5" y="244.8" width="6.2" height="6.2" fill="#1f77b4"/>
<text x="80.5" y="250.6" font-family='"Liberation Sans", sans-serif' font-size="7.6" letter-spacing="0.058" fill="#7f8390">Task</text>
<rect x="104.60000000000002" y="244.8" width="6.2" height="6.2" fill="#ff7f0e"/>
<text x="115.60000000000002" y="250.6" font-family='"Liberation Sans", sans-serif' font-size="7.6" letter-spacing="0.081" fill="#7f8390">Feature (development)</text>
<rect x="200.60000000000002" y="244.8" width="6.2" height="6.2" fill="#2ca02c"/>
<text x="211.60000000000002" y="250.6" font-family='"Liberation Sans", sans-serif' font-size="7.6" letter-spacing="0.139" fill="#7f8390">Bug</text>
</svg>
</div>
<div class="card" style="left:818px;top:604px;width:296.5px;height:120px">
<div class="hd" style="height:54.5px"></div>
<div class="tt" style="top:16.0px;left:14.9px"><span style="letter-spacing:-0.09px">User utilization (next 7 days) : Connie</span><br><span style="letter-spacing:0.126px">Consultant</span></div>
<svg class="abs" style="left:230.9px;top:17.4px" width="5" height="7" viewBox="0 0 5 7"><rect x=".3" y="1.2" width="4.400" height="5.600" rx=".8" fill="#8c91a4"/><rect x="0" y=".5" width="5" height=".9" fill="#8c91a4"/><rect x="1.500" y="0" width="2" height=".8" fill="#8c91a4"/></svg>
<svg class="abs" style="left:246.1px;top:17.4px" width="8" height="8" viewBox="0 0 8 8"><path d="M.5 7.200l.4-1.500L5.700 1.200l1.200 1.200-4.900 4.400Z" fill="#6f7487"/></svg>
<svg class="abs" style="left:267.5px;top:14.6px" width="14" height="14" viewBox="0 0 14 14"><path d="M1 1l12 12M13 1L1 13" stroke="#d8d8d8" stroke-width="1.2" fill="none"/></svg>
<svg class="abs" style="left:0;top:0" width="297" height="120" viewBox="0 0 297 120">
<path d="M59.90,154.70A89.1,89.1 0 0 1 238.10,154.70L202.60,154.70A53.6,53.6 0 0 0 95.40,154.70Z" fill="#e4e6ea"/>
<path d="M59.90,154.70A89.1,89.1 0 0 1 149.00,65.60L149.00,101.10A53.6,53.6 0 0 0 95.40,154.70Z" fill="#f97a07"/>
</svg>
</div>
</div></body></html>
